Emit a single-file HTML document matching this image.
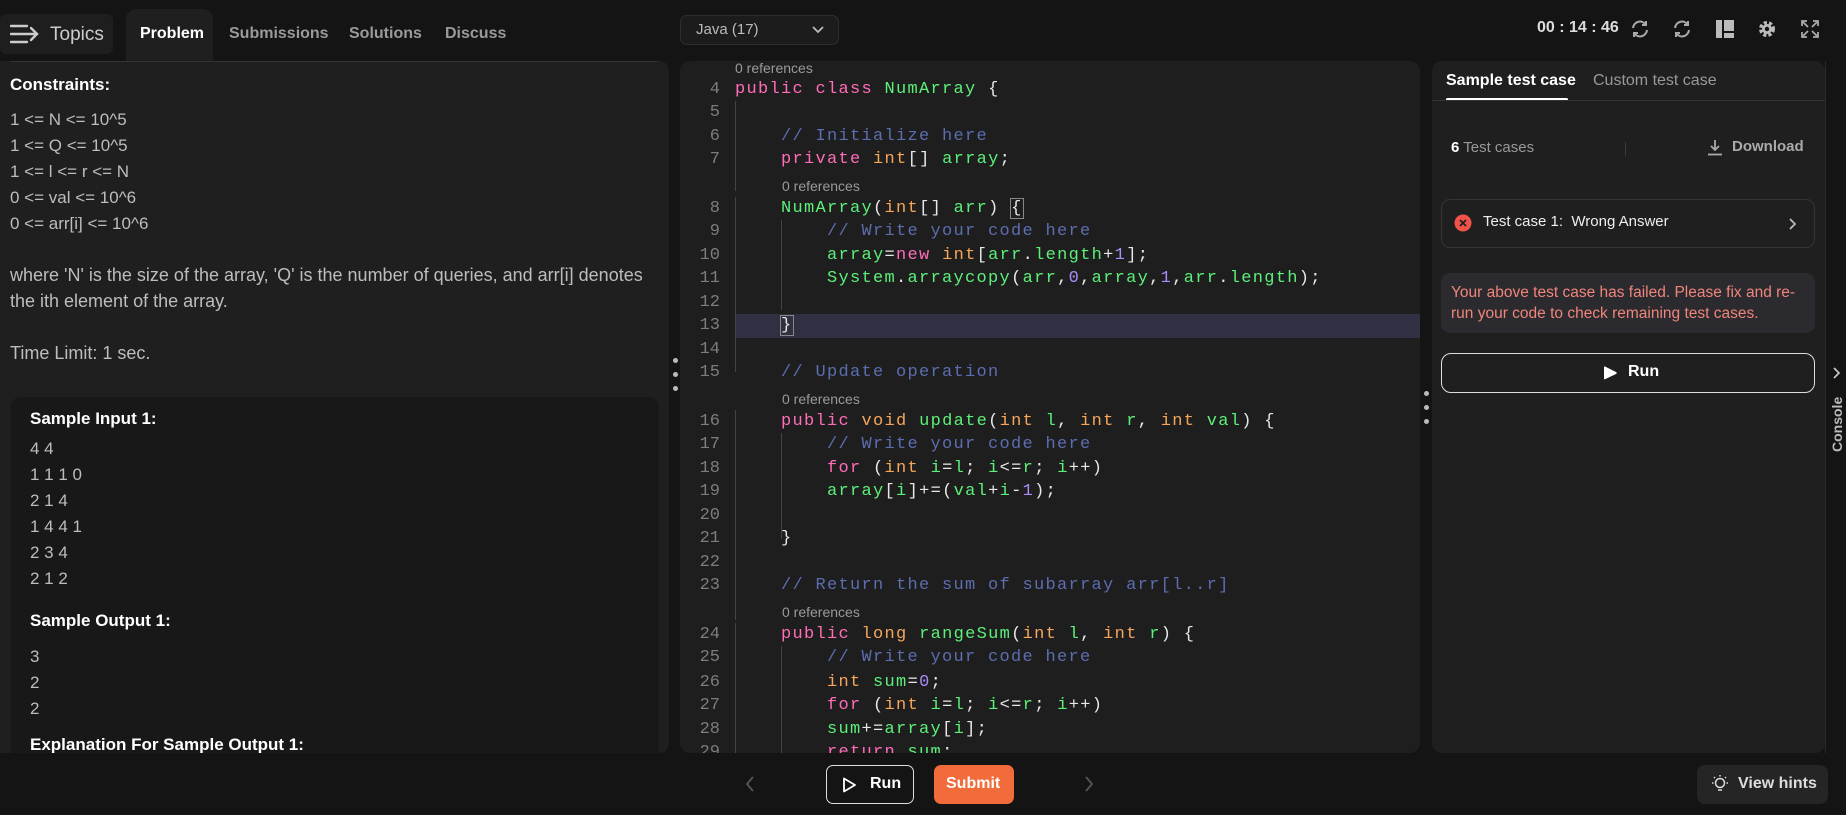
<!DOCTYPE html>
<html><head><meta charset="utf-8"><style>
*{margin:0;padding:0;box-sizing:border-box}
body{width:1846px;height:815px;background:#141414;font-family:"Liberation Sans",sans-serif;position:relative;overflow:hidden;color:#ddd}
.a{position:absolute}
.panel{position:absolute;background:#1f1f1f;border-radius:10px;overflow:hidden}
.lp{font-size:17px;color:#bdbdbd;white-space:nowrap}
.code{position:absolute;left:0;height:24px;line-height:24px;font-family:"Liberation Mono",monospace;font-size:17px;letter-spacing:1.3px;white-space:pre;color:#e8e8e8}
.ln{position:absolute;width:40px;text-align:right;left:0;font-family:"Liberation Mono",monospace;font-size:17px;color:#7d7d7d;height:24px;line-height:24px}
.ref{position:absolute;left:55px;font-size:14px;color:#9a9a9a;height:20px;line-height:20px}
.k{color:#ff6cb8}.t{color:#f5a65b}.g{color:#5cf07a}.c{color:#5c6db0}.n{color:#a98bfa}
.dot{position:absolute;width:5px;height:5px;border-radius:50%;background:#bbb}
</style></head><body>

<div class="a" style="left:0;top:14px;width:113px;height:40px;background:#1e1e1e;border-radius:6px"></div>
<svg class="a" style="left:10px;top:24px" width="30" height="20" viewBox="0 0 30 20"><g stroke="#ccc" stroke-width="2.4" fill="none" stroke-linecap="round"><line x1="1" y1="2" x2="17" y2="2"/><line x1="1" y1="10" x2="27" y2="10"/><line x1="1" y1="18" x2="17" y2="18"/><polyline points="21,4 27,10 21,16"/></g></svg>
<div class="a" style="left:50px;top:24px;font-size:19px;color:#ccc">Topics</div>
<div class="a" style="left:126px;top:9px;width:87px;height:52px;background:#1f1f1f;border-radius:10px 10px 0 0"></div>
<div class="a" style="left:140px;top:25px;font-size:16px;font-weight:bold;color:#fff">Problem</div>
<div class="a" style="left:229px;top:25px;font-size:16px;font-weight:bold;color:#9a9a9a">Submissions</div>
<div class="a" style="left:349px;top:25px;font-size:16px;font-weight:bold;color:#9a9a9a">Solutions</div>
<div class="a" style="left:445px;top:25px;font-size:16px;font-weight:bold;color:#9a9a9a">Discuss</div>

<div class="a" style="left:680px;top:15px;width:159px;height:30px;background:#1c1c1c;border:1px solid #2e2e2e;border-radius:7px"></div>
<div class="a" style="left:696px;top:21px;font-size:15px;color:#bbb">Java (17)</div>
<svg class="a" style="left:812px;top:26px" width="12" height="8"><polyline points="1,1 6,6 11,1" stroke="#bbb" stroke-width="1.8" fill="none"/></svg>

<div class="a" style="left:1537px;top:19px;font-size:16px;font-weight:bold;color:#ddd">00 : 14 : 46</div>
<svg class="a" style="left:1630px;top:19px" width="20" height="20" viewBox="0 0 20 20"><g stroke="#aaa" stroke-width="2" fill="none"><path d="M3 9a7 7 0 0 1 13-3"/><polyline points="16,2 16,6 12,6"/><path d="M17 11a7 7 0 0 1-13 3"/><polyline points="4,18 4,14 8,14"/></g></svg>
<svg class="a" style="left:1672px;top:19px" width="20" height="20" viewBox="0 0 20 20"><g stroke="#aaa" stroke-width="2" fill="none"><path d="M3 9a7 7 0 0 1 13-3"/><polyline points="16,2 16,6 12,6"/><path d="M17 11a7 7 0 0 1-13 3"/><polyline points="4,18 4,14 8,14"/></g></svg>
<svg class="a" style="left:1716px;top:20px" width="18" height="18"><rect x="0" y="0" width="6" height="18" fill="#bbb"/><rect x="8" y="0" width="10" height="11" fill="#bbb"/><rect x="8" y="13" width="10" height="5" fill="#bbb"/></svg>
<svg class="a" style="left:1757px;top:19px" width="20" height="20" viewBox="0 0 20 20"><circle cx="10" cy="10" r="6" fill="none" stroke="#bbb" stroke-width="4" stroke-dasharray="3 2"/><circle cx="10" cy="10" r="5" fill="#bbb"/><circle cx="10" cy="10" r="2.2" fill="#141414"/></svg>
<svg class="a" style="left:1801px;top:20px" width="18" height="18" viewBox="0 0 18 18"><g stroke="#aaa" stroke-width="1.8" fill="none"><polyline points="1,6 1,1 6,1"/><polyline points="12,1 17,1 17,6"/><polyline points="1,12 1,17 6,17"/><polyline points="12,17 17,17 17,12"/><line x1="2" y1="2" x2="7" y2="7"/><line x1="16" y1="2" x2="11" y2="7"/><line x1="2" y1="16" x2="7" y2="11"/><line x1="16" y1="16" x2="11" y2="11"/></g></svg>

<div class="panel" style="left:0;top:61px;width:669px;height:692px;border-radius:0 10px 10px 0">
  <div class="a" style="left:10px;top:0;width:648px;height:1px;background:#333"></div>
  <div class="a" style="left:10px;top:14px;font-size:17px;font-weight:bold;color:#fff">Constraints:</div>
  <div class="a lp" style="left:10px;top:49px">1 &lt;= N &lt;= 10^5</div>
  <div class="a lp" style="left:10px;top:75px">1 &lt;= Q &lt;= 10^5</div>
  <div class="a lp" style="left:10px;top:101px">1 &lt;= l &lt;= r &lt;= N</div>
  <div class="a lp" style="left:10px;top:127px">0 &lt;= val &lt;= 10^6</div>
  <div class="a lp" style="left:10px;top:153px">0 &lt;= arr[i] &lt;= 10^6</div>
  <div class="a lp" style="left:10px;top:204px;font-size:18px">where 'N' is the size of the array, 'Q' is the number of queries, and arr[i] denotes</div>
  <div class="a lp" style="left:10px;top:230px;font-size:18px">the ith element of the array.</div>
  <div class="a lp" style="left:10px;top:282px;font-size:18px">Time Limit: 1 sec.</div>
  <div class="a" style="left:11px;top:336px;width:648px;height:380px;background:#181818;border-radius:10px"></div>
  <div class="a" style="left:30px;top:348px;font-size:17px;font-weight:bold;color:#fff">Sample Input 1:</div>
  <div class="a lp" style="left:30px;top:378px">4 4</div>
  <div class="a lp" style="left:30px;top:404px">1 1 1 0</div>
  <div class="a lp" style="left:30px;top:430px">2 1 4</div>
  <div class="a lp" style="left:30px;top:456px">1 4 4 1</div>
  <div class="a lp" style="left:30px;top:482px">2 3 4</div>
  <div class="a lp" style="left:30px;top:508px">2 1 2</div>
  <div class="a" style="left:30px;top:550px;font-size:17px;font-weight:bold;color:#fff">Sample Output 1:</div>
  <div class="a lp" style="left:30px;top:586px">3</div>
  <div class="a lp" style="left:30px;top:612px">2</div>
  <div class="a lp" style="left:30px;top:638px">2</div>
  <div class="a" style="left:30px;top:674px;font-size:17px;font-weight:bold;color:#fff">Explanation For Sample Output 1:</div>
</div>
<div class="dot" style="left:673px;top:358px"></div><div class="dot" style="left:673px;top:372px"></div><div class="dot" style="left:673px;top:386px"></div>

<div class="panel" style="left:680px;top:61px;width:740px;height:692px;background:#1e1e1e">
 <div class="a" style="left:0;top:0;width:740px;height:692px">
  <div class="a" style="left:55px;top:253px;width:685px;height:24px;background:#303043"></div>
  <div class="a" style="left:55px;top:40px;width:1px;height:90px;background:#444"></div>
  <div class="a" style="left:55px;top:136px;width:1px;height:175px;background:#444"></div>
  <div class="a" style="left:55px;top:349px;width:1px;height:210px;background:#444"></div>
  <div class="a" style="left:55px;top:562px;width:1px;height:130px;background:#444"></div>
  <div class="a" style="left:101px;top:159px;width:1px;height:90px;background:#444"></div>
  <div class="a" style="left:101px;top:372px;width:1px;height:106px;background:#444"></div>
  <div class="a" style="left:101px;top:585px;width:1px;height:107px;background:#444"></div>

  <div class="ref" style="top:-3px">0 references</div>
  <div class="ln" style="top:17px">4</div><div class="code" style="left:55px;top:17px"><span class="k">public class</span> <span class="g">NumArray</span> {</div>
  <div class="ln" style="top:40px">5</div>
  <div class="ln" style="top:64px">6</div><div class="code" style="left:55px;top:64px">    <span class="c">// Initialize here</span></div>
  <div class="ln" style="top:87px">7</div><div class="code" style="left:55px;top:87px">    <span class="k">private</span> <span class="t">int</span>[] <span class="g">array</span>;</div>
  <div class="ref" style="left:102px;top:115px">0 references</div>
  <div class="ln" style="top:136px">8</div><div class="code" style="left:55px;top:136px">    <span class="g">NumArray</span>(<span class="t">int</span>[] <span class="g">arr</span>) <span style="outline:1px solid #888">{</span></div>
  <div class="ln" style="top:159px">9</div><div class="code" style="left:55px;top:159px">        <span class="c">// Write your code here</span></div>
  <div class="ln" style="top:183px">10</div><div class="code" style="left:55px;top:183px">        <span class="g">array</span>=<span class="k">new</span> <span class="t">int</span>[<span class="g">arr</span>.<span class="g">length</span>+<span class="n">1</span>];</div>
  <div class="ln" style="top:206px">11</div><div class="code" style="left:55px;top:206px">        <span class="g">System</span>.<span class="g">arraycopy</span>(<span class="g">arr</span>,<span class="n">0</span>,<span class="g">array</span>,<span class="n">1</span>,<span class="g">arr</span>.<span class="g">length</span>);</div>
  <div class="ln" style="top:230px">12</div>
  <div class="ln" style="top:253px">13</div><div class="code" style="left:55px;top:253px">    <span style="outline:1px solid #888">}</span></div>
  <div class="ln" style="top:277px">14</div>
  <div class="ln" style="top:300px">15</div><div class="code" style="left:55px;top:300px">    <span class="c">// Update operation</span></div>
  <div class="ref" style="left:102px;top:328px">0 references</div>
  <div class="ln" style="top:349px">16</div><div class="code" style="left:55px;top:349px">    <span class="k">public</span> <span class="t">void</span> <span class="g">update</span>(<span class="t">int</span> <span class="g">l</span>, <span class="t">int</span> <span class="g">r</span>, <span class="t">int</span> <span class="g">val</span>) {</div>
  <div class="ln" style="top:372px">17</div><div class="code" style="left:55px;top:372px">        <span class="c">// Write your code here</span></div>
  <div class="ln" style="top:396px">18</div><div class="code" style="left:55px;top:396px">        <span class="k">for</span> (<span class="t">int</span> <span class="g">i</span>=<span class="g">l</span>; <span class="g">i</span>&lt;=<span class="g">r</span>; <span class="g">i</span>++)</div>
  <div class="ln" style="top:419px">19</div><div class="code" style="left:55px;top:419px">        <span class="g">array</span>[<span class="g">i</span>]+=(<span class="g">val</span>+<span class="g">i</span>-<span class="n">1</span>);</div>
  <div class="ln" style="top:443px">20</div>
  <div class="ln" style="top:466px">21</div><div class="code" style="left:55px;top:466px">    }</div>
  <div class="ln" style="top:490px">22</div>
  <div class="ln" style="top:513px">23</div><div class="code" style="left:55px;top:513px">    <span class="c">// Return the sum of subarray arr[l..r]</span></div>
  <div class="ref" style="left:102px;top:541px">0 references</div>
  <div class="ln" style="top:562px">24</div><div class="code" style="left:55px;top:562px">    <span class="k">public</span> <span class="t">long</span> <span class="g">rangeSum</span>(<span class="t">int</span> <span class="g">l</span>, <span class="t">int</span> <span class="g">r</span>) {</div>
  <div class="ln" style="top:585px">25</div><div class="code" style="left:55px;top:585px">        <span class="c">// Write your code here</span></div>
  <div class="ln" style="top:610px">26</div><div class="code" style="left:55px;top:610px">        <span class="t">int</span> <span class="g">sum</span>=<span class="n">0</span>;</div>
  <div class="ln" style="top:633px">27</div><div class="code" style="left:55px;top:633px">        <span class="k">for</span> (<span class="t">int</span> <span class="g">i</span>=<span class="g">l</span>; <span class="g">i</span>&lt;=<span class="g">r</span>; <span class="g">i</span>++)</div>
  <div class="ln" style="top:657px">28</div><div class="code" style="left:55px;top:657px">        <span class="g">sum</span>+=<span class="g">array</span>[<span class="g">i</span>];</div>
  <div class="ln" style="top:680px">29</div><div class="code" style="left:55px;top:680px">        <span class="k">return</span> <span class="g">sum</span>;</div>
 </div>
</div>
<div class="dot" style="left:1424px;top:391px"></div><div class="dot" style="left:1424px;top:405px"></div><div class="dot" style="left:1424px;top:419px"></div>

<div class="panel" style="left:1432px;top:61px;width:393px;height:692px">
  <div class="a" style="left:14px;top:11px;font-size:16px;font-weight:bold;color:#fff">Sample test case</div>
  <div class="a" style="left:14px;top:37px;width:122px;height:3px;background:#fff;border-radius:2px"></div>
  <div class="a" style="left:161px;top:11px;font-size:16px;color:#999">Custom test case</div>
  <div class="a" style="left:0;top:39px;width:393px;height:1px;background:#333"></div>
  <div class="a" style="left:19px;top:78px;font-size:15px;color:#999"><b style="color:#fff">6</b> Test cases</div>
  <div class="a" style="left:193px;top:81px;width:1px;height:14px;background:#3a3a3a"></div>
  <svg class="a" style="left:275px;top:78px" width="16" height="17" viewBox="0 0 16 17"><g stroke="#aaa" stroke-width="1.8" fill="none"><line x1="8" y1="1" x2="8" y2="11"/><polyline points="4,7 8,11 12,7"/><line x1="1" y1="15.5" x2="15" y2="15.5"/></g></svg>
  <div class="a" style="left:300px;top:77px;font-size:15px;font-weight:bold;color:#aaa">Download</div>
  <div class="a" style="left:9px;top:138px;width:374px;height:49px;border:1px solid #3a3333;border-radius:9px"></div>
  <svg class="a" style="left:22px;top:153px" width="18" height="18"><circle cx="9" cy="9" r="8.5" fill="#f0524a"/><g stroke="#1f1f1f" stroke-width="1.8"><line x1="6" y1="6" x2="12" y2="12"/><line x1="12" y1="6" x2="6" y2="12"/></g></svg>
  <div class="a" style="left:51px;top:152px;font-size:15px;color:#eee">Test case 1:&nbsp; Wrong Answer</div>
  <svg class="a" style="left:356px;top:157px" width="9" height="12"><polyline points="2,1 7,6 2,11" stroke="#bbb" stroke-width="1.8" fill="none"/></svg>
  <div class="a" style="left:9px;top:212px;width:374px;height:60px;background:#2b2a2f;border-radius:9px"></div>
  <div class="a" style="left:19px;top:221px;width:352px;font-size:15.5px;line-height:21px;color:#f0857a">Your above test case has failed. Please fix and re-run your code to check remaining test cases.</div>
  <div class="a" style="left:9px;top:292px;width:374px;height:40px;border:1.5px solid #ddd;border-radius:10px"></div>
  <svg class="a" style="left:171px;top:304px" width="15" height="16"><path d="M2 1.5 Q1 1 1 2.5 V13.5 Q1 15 2.5 14 L13 9 Q14.5 8 13 7 Z" fill="#fff"/></svg>
  <div class="a" style="left:196px;top:302px;font-size:16px;font-weight:bold;color:#fff">Run</div>
</div>
<div class="a" style="left:1825px;top:61px;width:1px;height:692px;background:#2a2a2a"></div>
<svg class="a" style="left:1833px;top:367px" width="8" height="12"><polyline points="1,1 6,6 1,11" stroke="#ccc" stroke-width="1.6" fill="none"/></svg>
<div class="a" style="font-size:14px;font-weight:bold;color:#bbb;transform:rotate(-90deg);transform-origin:left top;top:452px;left:1829px">Console</div>

<svg class="a" style="left:746px;top:776px" width="9" height="16"><polyline points="7,1 1,8 7,15" stroke="#555" stroke-width="1.8" fill="none"/></svg>
<div class="a" style="left:826px;top:765px;width:88px;height:39px;border:1.5px solid #ddd;border-radius:7px"></div>
<svg class="a" style="left:842px;top:777px" width="14" height="16"><path d="M2 1.5 V14.5 L13 8 Z" stroke="#fff" stroke-width="1.8" fill="none" stroke-linejoin="round"/></svg>
<div class="a" style="left:870px;top:775px;font-size:16px;font-weight:bold;color:#fff">Run</div>
<div class="a" style="left:934px;top:765px;width:80px;height:39px;background:#f26b3a;border-radius:7px"></div>
<div class="a" style="left:946px;top:775px;font-size:16px;font-weight:bold;color:#fff">Submit</div>
<svg class="a" style="left:1084px;top:776px" width="9" height="16"><polyline points="2,1 8,8 2,15" stroke="#555" stroke-width="1.8" fill="none"/></svg>
<div class="a" style="left:1697px;top:765px;width:131px;height:39px;background:#252525;border-radius:8px"></div>
<svg class="a" style="left:1710px;top:774px" width="20" height="20" viewBox="0 0 20 20"><g stroke="#ddd" stroke-width="1.5" fill="none"><circle cx="10" cy="9" r="4.5"/><line x1="8" y1="16" x2="12" y2="16"/><line x1="10" y1="1" x2="10" y2="2.5"/><line x1="2" y1="9" x2="3.5" y2="9"/><line x1="16.5" y1="9" x2="18" y2="9"/><line x1="4" y1="3" x2="5" y2="4"/><line x1="16" y1="3" x2="15" y2="4"/></g></svg>
<div class="a" style="left:1738px;top:775px;font-size:16px;font-weight:bold;color:#ddd">View hints</div>
</body></html>
